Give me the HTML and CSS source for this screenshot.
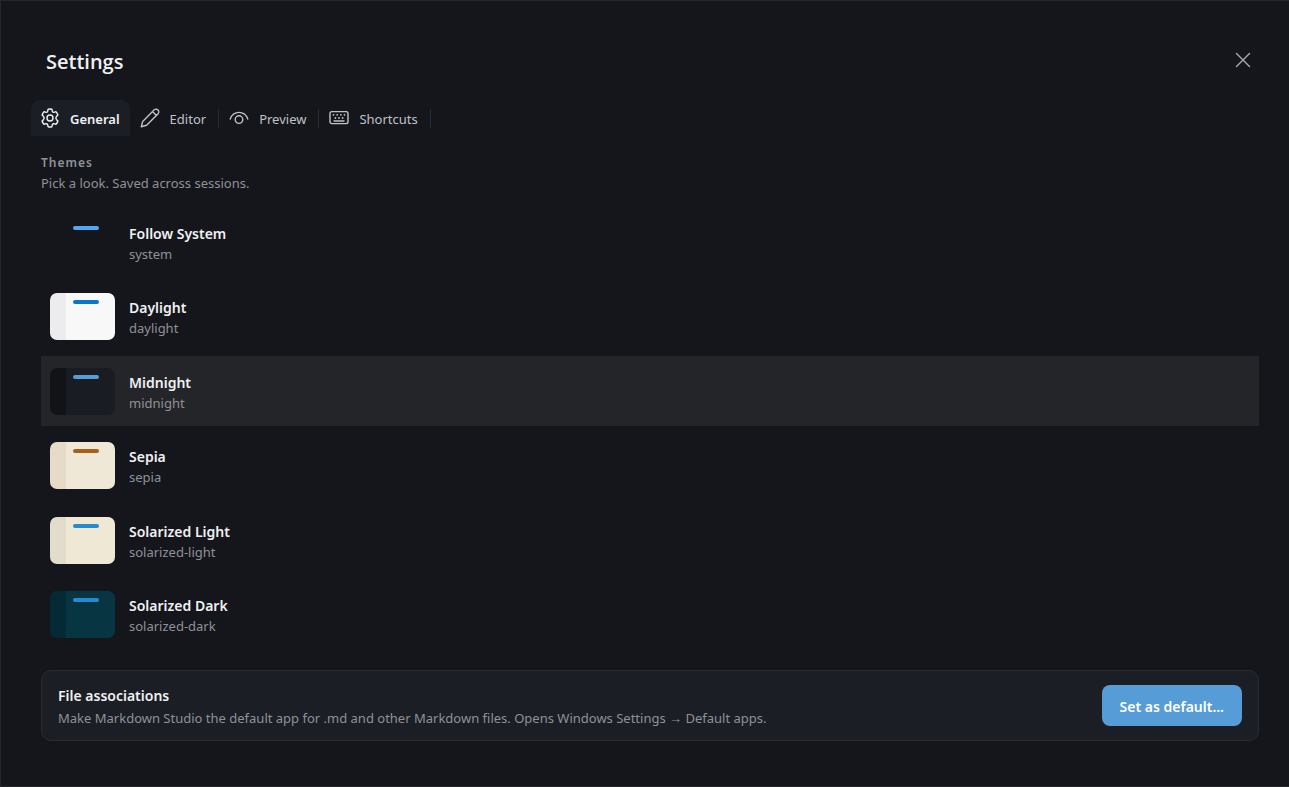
FILE: index.html
```
<!DOCTYPE html>
<html lang="en">
<head>
    <meta charset="UTF-8">
    <meta name="viewport" content="width=device-width, initial-scale=1.0">
    <title>Settings</title>
    <link rel="stylesheet" href="styles.css">
</head>
<body>
    <main class="settings">
        <header class="settings-header">
            <h1>Settings</h1>
            <button type="button" class="close-btn" aria-label="Close">
                <svg width="16" height="16" viewBox="0 0 16 16"><path d="M1.5 1.5l13 13M14.5 1.5l-13 13"/></svg>
            </button>
        </header>

        <nav class="tabs" role="tablist">
            <button type="button" class="tab active" role="tab" aria-selected="true">
                <svg width="20" height="20" viewBox="0 0 20 20"><path d="M8.1 1.3Q10 .8 11.9 1.3L12.4 3.4Q12.8 4.4 13.9 4.3L16 3.7Q17.4 5.1 17.9 7L16.4 8.6Q15.3 10 16.4 11.4L17.9 13Q17.4 14.9 16 16.3L13.9 15.7Q12.8 15.6 12.4 16.6L11.9 18.7Q10 19.2 8.1 18.7L7.6 16.6Q7.2 15.6 6.1 15.7L4 16.3Q2.6 14.9 2.1 13L3.6 11.4Q4.7 10 3.6 8.6L2.1 7Q2.6 5.1 4 3.7L6.1 4.3Q7.2 4.4 7.6 3.4Z"/><circle cx="10" cy="10" r="3"/></svg>
                <span>General</span>
            </button>
            <button type="button" class="tab" role="tab" aria-selected="false">
                <svg width="20" height="20" viewBox="0 0 20 20"><path d="M1.3 18.7L2.7 13.4 14 2.1Q15.1 1 16.6 1.2 18.2 1.5 18.7 3 19.1 4.7 17.9 6L6.6 17.3ZM12.5 3.6l3.9 3.9"/></svg>
                <span>Editor</span>
            </button>
            <button type="button" class="tab" role="tab" aria-selected="false">
                <svg width="20" height="20" viewBox="0 0 20 20"><path d="M1.2 11Q2 8 4.4 6.2 7 4.4 10 4.4T15.6 6.2Q18 8 18.8 11"/><circle cx="10" cy="11.6" r="3.8"/></svg>
                <span>Preview</span>
            </button>
            <button type="button" class="tab" role="tab" aria-selected="false">
                <svg width="20" height="20" viewBox="0 0 20 20"><rect x="1" y="3.6" width="18" height="12" rx="1.8"/><path d="M5 13h10"/><g class="keys"><circle cx="4.5" cy="6.8" r=".9"/><circle cx="8.2" cy="6.8" r=".9"/><circle cx="11.8" cy="6.8" r=".9"/><circle cx="15.5" cy="6.8" r=".9"/><circle cx="6.4" cy="10" r=".9"/><circle cx="10" cy="10" r=".9"/><circle cx="13.6" cy="10" r=".9"/></g></svg>
                <span>Shortcuts</span>
            </button>
        </nav>

        <section class="themes">
            <h2>Themes</h2>
            <p>Pick a look. Saved across sessions.</p>
            <div class="theme-list">
                <button type="button" class="theme system">
                    <span class="swatch"></span>
                    <span class="theme-text"><strong>Follow System</strong><small>system</small></span>
                </button>
                <button type="button" class="theme daylight">
                    <span class="swatch"></span>
                    <span class="theme-text"><strong>Daylight</strong><small>daylight</small></span>
                </button>
                <button type="button" class="theme midnight selected" aria-pressed="true">
                    <span class="swatch"></span>
                    <span class="theme-text"><strong>Midnight</strong><small>midnight</small></span>
                </button>
                <button type="button" class="theme sepia">
                    <span class="swatch"></span>
                    <span class="theme-text"><strong>Sepia</strong><small>sepia</small></span>
                </button>
                <button type="button" class="theme solarized-light">
                    <span class="swatch"></span>
                    <span class="theme-text"><strong>Solarized Light</strong><small>solarized-light</small></span>
                </button>
                <button type="button" class="theme solarized-dark">
                    <span class="swatch"></span>
                    <span class="theme-text"><strong>Solarized Dark</strong><small>solarized-dark</small></span>
                </button>
            </div>
        </section>

        <section class="associations">
            <div class="associations-text">
                <h3>File associations</h3>
                <p>Make Markdown Studio the default app for .md and other Markdown files. Opens Windows Settings → Default apps.</p>
            </div>
            <button type="button" class="primary-btn">Set as default...</button>
        </section>
    </main>
</body>
</html>
```
FILE: styles.css
```
* {
    box-sizing: border-box;
}

body {
    margin: 0;
    background: #15161b;
    color: #f0f0f2;
    font-family: "Noto Sans", "Open Sans", sans-serif;
    font-size: 13px;
    line-height: 20px;
}

h1, h2, h3, p {
    margin: 0;
}

button {
    padding: 0;
    border: none;
    background: none;
    color: inherit;
    font: inherit;
    cursor: pointer;
}

svg {
    display: block;
    flex: none;
    fill: none;
    stroke: currentColor;
    stroke-width: 1.4;
    stroke-linejoin: round;
    stroke-linecap: round;
}

.settings {
    display: flex;
    flex-direction: column;
    min-height: 100vh;
    padding: 43px 30px 45px 30px;
    border: 1px solid #26272d;
    border-right: none;
}

/* Header */
.settings-header {
    display: flex;
    justify-content: space-between;
    align-items: center;
    height: 32px;
    padding: 0 8px 0 15px;
}

.settings-header h1 {
    padding-top: 3px;
    font-family: "Open Sans", "Noto Sans", sans-serif;
    font-size: 20px;
    font-weight: 600;
    line-height: 32px;
}

.close-btn {
    color: #a9abb3;
}

/* Tabs */
.tabs {
    display: flex;
    margin-top: 24px;
}

.tab {
    display: flex;
    align-items: center;
    gap: 10px;
    height: 36px;
    padding: 0 13px 0 10px;
    color: #c0c1c5;
    position: relative;
}

.tab span {
    padding-top: 1px;
}

.tab + .tab::after {
    content: "";
    position: absolute;
    top: 9px;
    right: 0;
    width: 1px;
    height: 19px;
    background: #2a2b31;
}

.tab.active {
    padding: 0 10px 0 9px;
    border-radius: 9px 9px 0 0;
    background: #1b1e25;
    color: #f0f0f2;
    font-weight: 600;
}

.keys {
    fill: currentColor;
    stroke: none;
}

/* Theme list */
.themes {
    display: flex;
    flex: 1;
    flex-direction: column;
    padding: 17px 0 0 10px;
}

.themes h2 {
    color: #8f9199;
    font-size: 12px;
    font-weight: 600;
    letter-spacing: 1px;
}

.themes p {
    color: #8f9199;
    line-height: 20px;
}

.theme-list {
    display: flex;
    flex: 1;
    flex-direction: column;
    justify-content: space-between;
    margin-top: 14px;
}

.theme {
    display: flex;
    align-items: center;
    gap: 14px;
    height: 70px;
    padding: 0 9px;
    text-align: left;
}

.theme.selected {
    background: #242529;
}

.theme-text {
    padding-top: 3px;
}

.theme-text strong, .theme-text small {
    display: block;
    line-height: 21px;
}

.theme-text strong {
    font-size: 14px;
    font-weight: 600;
}

.theme-text small {
    color: #8f9199;
    font-size: 13px;
}

.swatch {
    width: 65px;
    height: 47px;
    padding: 7px 0 0 23px;
    border-radius: 7px;
    background: linear-gradient(to right, var(--side) 16px, var(--page) 16px);
}

.swatch::before {
    content: "";
    display: block;
    width: 26px;
    height: 4px;
    border-radius: 2px;
    background: var(--accent);
}

.system {
    --side: transparent;
    --page: transparent;
    --accent: #4ea8f5;
}

.daylight {
    --side: #ececee;
    --page: #f8f8f8;
    --accent: #0878cc;
}

.midnight {
    --side: #121317;
    --page: #1a1c23;
    --accent: #569cd6;
}

.sepia {
    --side: #e6dbc7;
    --page: #f0e8d6;
    --accent: #a5611b;
}

.solarized-light {
    --side: #e2dcca;
    --page: #eee8d5;
    --accent: #268bd2;
}

.solarized-dark {
    --side: #042b35;
    --page: #073642;
    --accent: #268bd2;
}

/* File associations */
.associations {
    display: flex;
    justify-content: space-between;
    align-items: center;
    min-height: 71px;
    margin: 20px 0 0 10px;
    padding: 0 16px;
    border: 1px solid #2a2b33;
    border-radius: 10px;
    background: #1b1e25;
}

.associations-text {
    padding-top: 2px;
}

.associations h3 {
    font-size: 14px;
    font-weight: 600;
    line-height: 22px;
}

.associations p {
    color: #8f9199;
    line-height: 22px;
}

.primary-btn {
    height: 41px;
    padding: 2px 18px 0;
    border-radius: 8px;
    background: #569cd6;
    color: #fff;
    font-size: 14px;
    font-weight: 600;
}
```
